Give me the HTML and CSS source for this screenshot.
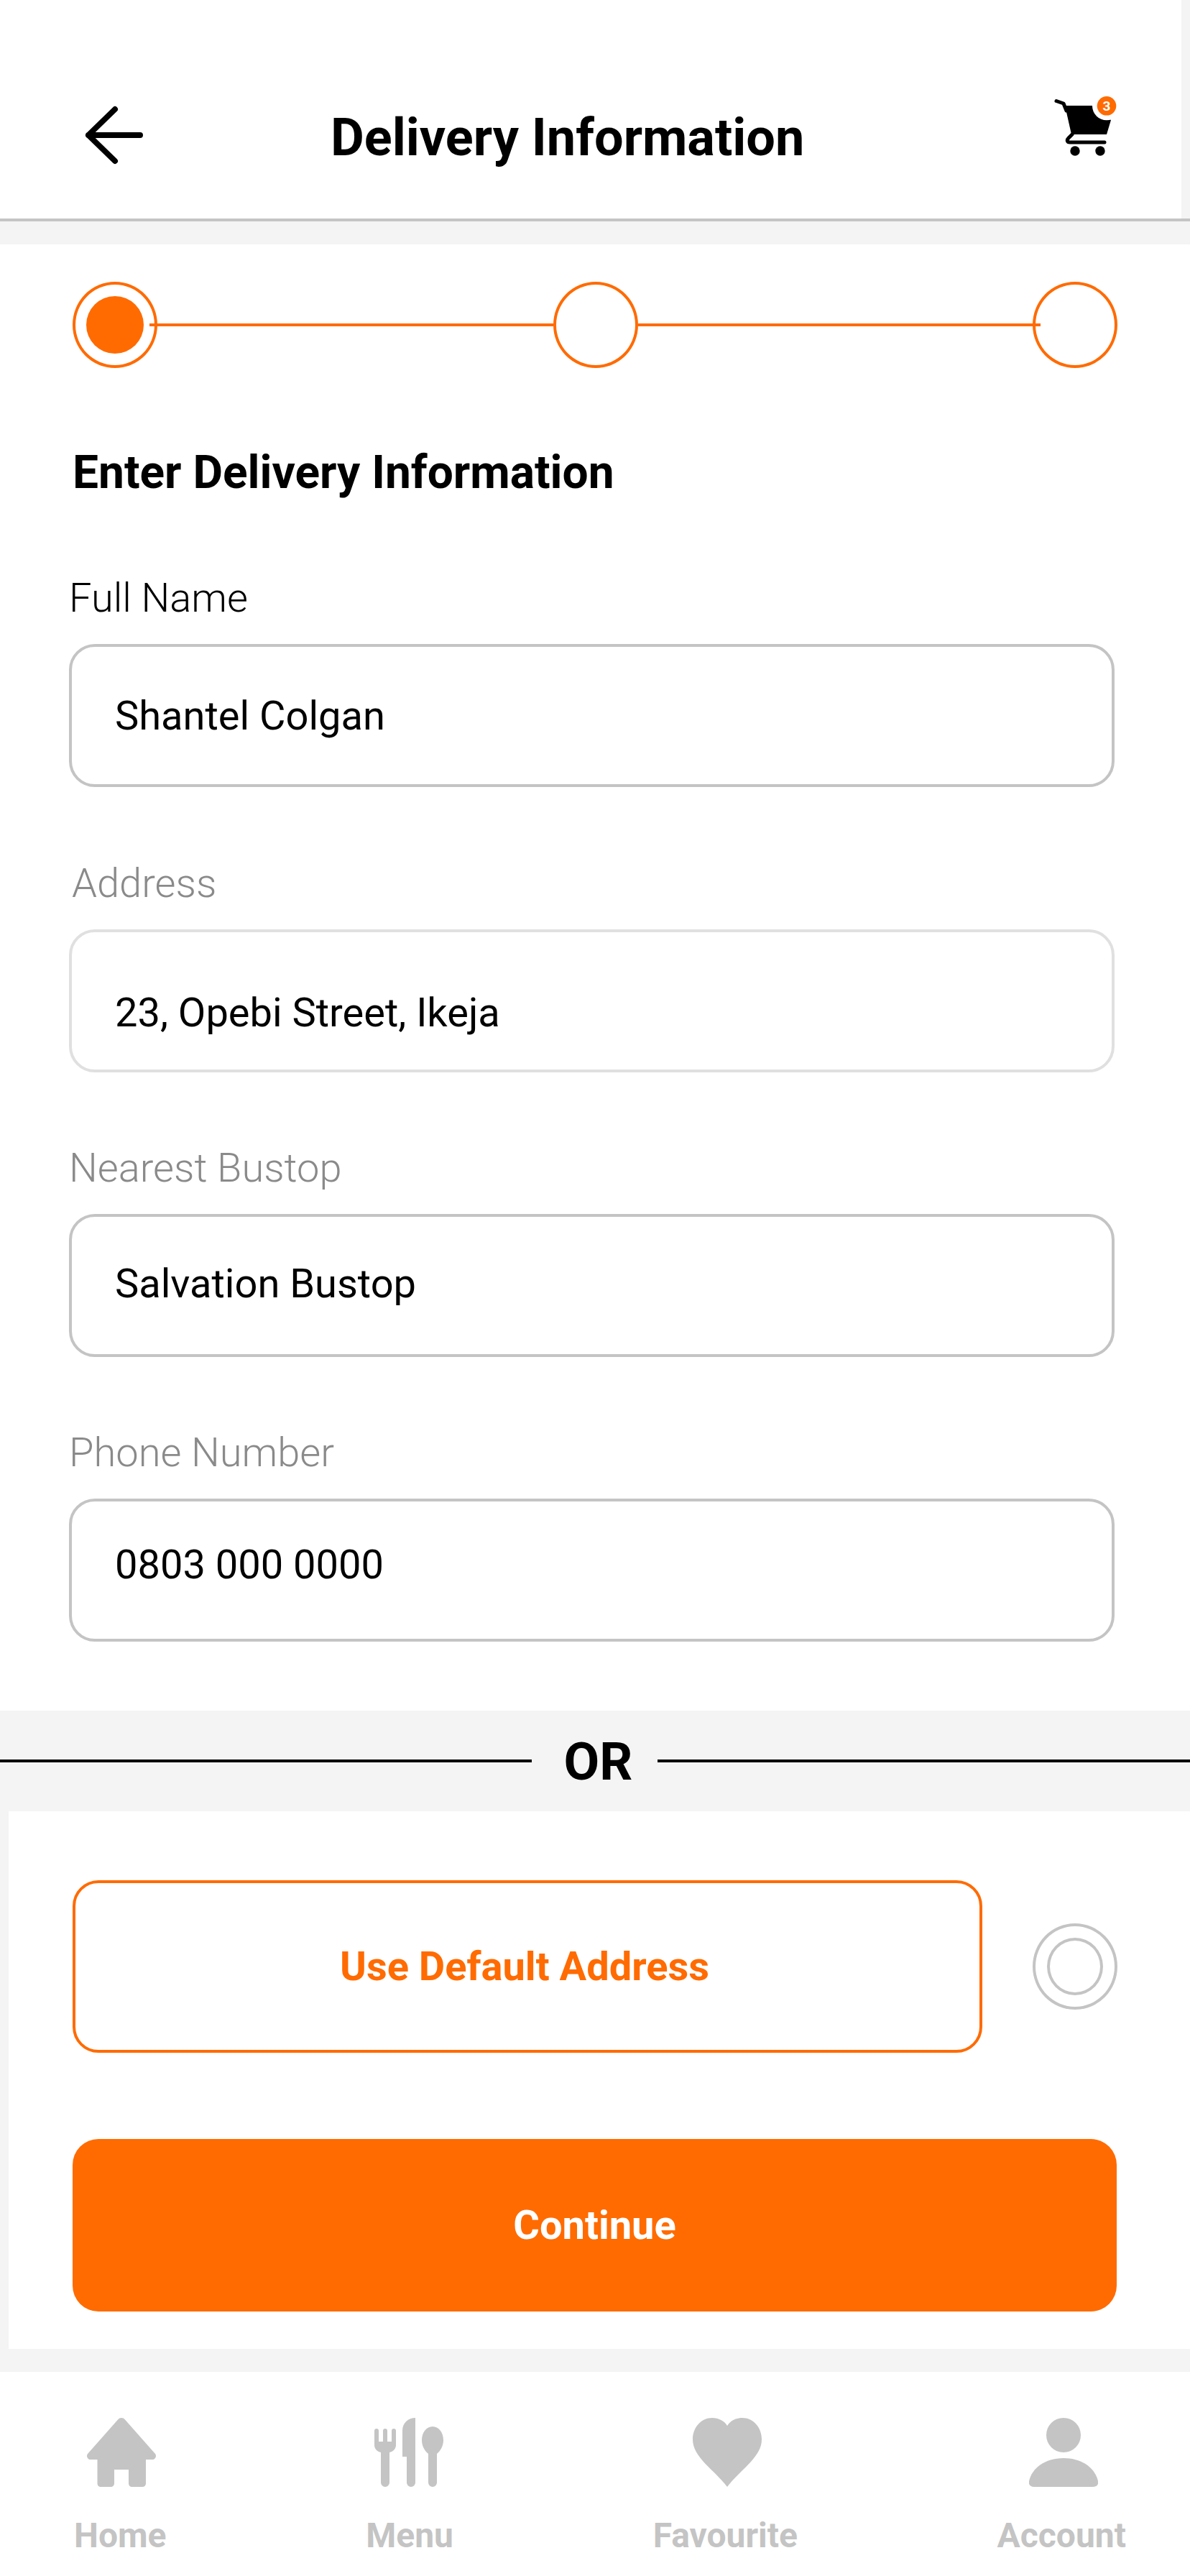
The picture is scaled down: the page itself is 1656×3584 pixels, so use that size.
FILE: index.html
```html
<!DOCTYPE html>
<html lang="en">
<head>
<meta charset="utf-8">
<title>Delivery Information</title>
<link rel="stylesheet" href="styles.css">
</head>
<body>
<div class="app">
  <header class="topbar">
    <div class="topbar-inner">
      <svg class="back" viewBox="0 0 84 84"><path d="M78 42H6M43 6 6 42l37 36" fill="none" stroke="#000" stroke-width="8" stroke-linecap="round" stroke-linejoin="round"/></svg>
      <h1 class="title">Delivery Information</h1>
      <svg class="cart" viewBox="0 0 86 84"><path d="M3 6.500 13 10l4 10" fill="none" stroke="#000" stroke-width="5" stroke-linecap="round" stroke-linejoin="round"/><path d="M15 13h40l24 20-6 20H24z" fill="#000"/><path d="M25 53l-5 5c-3 3-2 6 2 6h48" fill="none" stroke="#000" stroke-width="5" stroke-linecap="round" stroke-linejoin="round"/><circle cx="29" cy="76" r="6.700" fill="#000"/><circle cx="64" cy="76" r="6.700" fill="#000"/><circle cx="73" cy="13.300" r="20" fill="#fff"/><circle cx="73" cy="13.300" r="13.300" fill="#ff6b00"/><text x="73" y="20" text-anchor="middle" class="cart-count">3</text></svg>
    </div>
  </header>

  <main class="form-section">
    <div class="stepper">
      <span class="step"><span class="step-dot"></span></span>
      <span class="step-line step-line-first"></span>
      <span class="step"></span>
      <span class="step-line step-line-last"></span>
      <span class="step"></span>
    </div>
    <h2 class="form-heading">Enter Delivery Information</h2>
    <div class="field">
      <label class="label label-dark">Full Name</label>
      <div class="input">Shantel Colgan</div>
    </div>
    <div class="field field-address">
      <label class="label label-indent">Address</label>
      <div class="input input-light input-low">23, Opebi Street, Ikeja</div>
    </div>
    <div class="field">
      <label class="label">Nearest Bustop</label>
      <div class="input input-mid">Salvation Bustop</div>
    </div>
    <div class="field">
      <label class="label">Phone Number</label>
      <div class="input input-high">0803 000 0000</div>
    </div>
  </main>

  <div class="divider">
    <span class="divider-line divider-line-left"></span>
    <span class="divider-text">OR</span>
    <span class="divider-line"></span>
  </div>

  <section class="actions">
    <div class="default-row">
      <button class="btn-outline">Use Default Address</button>
      <span class="radio"><span class="radio-inner"></span></span>
    </div>
    <button class="btn-primary">Continue</button>
  </section>

  <nav class="tabbar">
    <div class="tab tab-home">
      <svg class="tab-icon" viewBox="0 0 96 96"><path d="M43 2.500 1 50c-2.500 3 0 8 4 8h9.500v33c0 3 2 5 5 5H33c3 0 5-2 5-5V72h20v19c0 3 2 5 5 5h14c3 0 5-2 5-5V58h9c4 0 6.500-5 4-8L53 2.500c-2.500-3.300-7.500-3.300-10 0z" fill="#c4c4c4"/></svg>
      <span class="tab-label">Home</span>
    </div>
    <div class="tab tab-menu">
      <svg class="tab-icon" viewBox="0 0 96 96"><path d="M0 18a3 3 0 0 1 6 0v15h6V18a3 3 0 0 1 6 0v15h6V18a3 3 0 0 1 6 0v20c0 5-4 9-9 10v42a6 6 0 0 1-12 0V48C4 47 0 43 0 38z" fill="#c4c4c4"/><path d="M57 0C47 0 39 7 39 18v36h6v36a6 6 0 0 0 12 0z" fill="#c4c4c4"/><path d="M81 12c-8.500 0-15 8.500-15 19 0 8 4 15 9 19v40a6 6 0 0 0 12 0V50c5-4 9-11 9-19 0-10.500-6.500-19-15-19z" fill="#c4c4c4"/></svg>
      <span class="tab-label">Menu</span>
    </div>
    <div class="tab tab-fav">
      <svg class="tab-icon" viewBox="0 0 96 96"><path d="M48 11C44 4 36 0 27 0 12 0 0 13 0 30c0 25 30 42 48 66 18-24 48-41 48-66C96 13 84 0 69 0 60 0 52 4 48 11z" fill="#c4c4c4"/></svg>
      <span class="tab-label">Favourite</span>
    </div>
    <div class="tab tab-acct">
      <svg class="tab-icon" viewBox="0 0 96 96"><ellipse cx="48" cy="24" rx="24" ry="24" fill="#c4c4c4"/><path d="M48 56C22 56 4 70 0 88c-1 5 2 8 7 8h82c5 0 8-3 7-8-4-18-22-32-48-32z" fill="#c4c4c4"/></svg>
      <span class="tab-label">Account</span>
    </div>
  </nav>
</div>
</body>
</html>
```
FILE: styles.css
```css
* { box-sizing: border-box; }
html, body { margin: 0; padding: 0; }
body { background: #f4f4f4; font-family: Roboto, "Liberation Sans", sans-serif; color: #000; }
.app { width: 1656px; height: 3584px; display: flex; flex-direction: column; background: #f4f4f4; overflow: hidden; }

.topbar { height: 308px; border-bottom: 4px solid #c4c4c4; flex: none; }
.topbar-inner { width: 1644px; height: 304px; background: #fff; display: flex; align-items: flex-start; padding: 0 91px 0 117px; }
.back { width: 84px; height: 84px; margin-top: 146px; flex: none; }
.title { margin: 150px 0 0 259px; font-size: 72px; line-height: 84px; font-weight: 700; white-space: nowrap; flex: none; }
.cart { width: 86px; height: 84px; margin: 134px 0 0 auto; flex: none; overflow: visible; }
.cart-count { font: 700 19px Roboto, sans-serif; fill: #fff; }

.form-section { margin-top: 32px; height: 2040px; background: #fff; flex: none; padding: 52px 0 0 96px; }
.stepper { display: flex; align-items: center; margin-left: 5px; }
.step { width: 118px; height: 120px; border: 4px solid #ff6b00; border-radius: 50%; display: flex; align-items: center; justify-content: center; flex: none; }
.step-dot { width: 80px; height: 80px; border-radius: 50%; background: #ff6b00; }
.step-line { height: 4px; background: #ff6b00; flex: none; }
.step-line-first { width: 562px; margin-left: -11px; }
.step-line-last { width: 560px; margin-right: -11px; }
.form-heading { margin: 108px 0 0 5px; font-size: 64px; line-height: 76px; font-weight: 700; }
.form-heading + .field { margin-top: 104px; }
.field + .field { margin-top: 101px; }
.field + .field-address { margin-top: 102px; }
.label { display: block; font-size: 56px; line-height: 64px; font-weight: 300; color: #8a8a8a; }
.label-dark { color: #000; }
.label-indent { margin-left: 4px; }
.input { width: 1455px; height: 199px; margin-top: 32px; border: 4px solid #c4c4c4; border-radius: 36px; background: #fff; padding: 0 0 0 60px; display: flex; align-items: center; font-size: 56px; color: #000; }
.input-light { border-color: #e0e0e0; }
.input-low { padding-top: 32px; }
.input-mid { padding-bottom: 5px; }
.input-high { padding-bottom: 15px; }

.divider { height: 140px; display: flex; align-items: center; flex: none; }
.divider-line { height: 4px; background: #000; flex: 1; }
.divider-line-left { flex: none; width: 740px; }
.divider-text { font-size: 72px; font-weight: 700; width: 175px; padding-left: 10px; margin-top: 3px; text-align: center; line-height: 84px; }

.actions { margin-left: 12px; height: 748px; background: #fff; flex: none; padding: 96px 0 0 89px; }
.default-row { display: flex; align-items: center; }
.btn-outline { width: 1266px; height: 240px; border: 4px solid #ff6b00; border-radius: 36px; background: #fff; color: #ff6b00; font: 700 56px Roboto, sans-serif; padding: 0 8px 0 0; flex: none; }
.radio { width: 118px; height: 120px; margin-left: 70px; border: 4px solid #c4c4c4; border-radius: 50%; display: flex; align-items: center; justify-content: center; flex: none; }
.radio-inner { width: 78px; height: 80px; border: 4px solid #c4c4c4; border-radius: 50%; }
.btn-primary { display: block; width: 1453px; height: 240px; margin-top: 120px; border: 0; border-radius: 36px; background: #ff6b00; color: #fff; font: 700 56px Roboto, sans-serif; padding: 0; }

.tabbar { margin-top: 32px; flex: 1; background: #fff; display: flex; justify-content: space-between; align-items: flex-start; padding: 64px 89px 0 103px; }
.tab { display: flex; flex-direction: column; align-items: center; }
.tab-icon { width: 96px; height: 96px; flex: none; }
.tab-label { margin-top: 40px; font-size: 48px; line-height: 56px; font-weight: 700; color: #c4c4c4; white-space: nowrap; }
.tab-home .tab-icon { margin-left: 3px; }
.tab-menu .tab-icon { margin-right: 3px; }
.tab-fav .tab-icon { margin-left: 5px; }
.tab-acct .tab-icon { margin-left: 5px; }
```
